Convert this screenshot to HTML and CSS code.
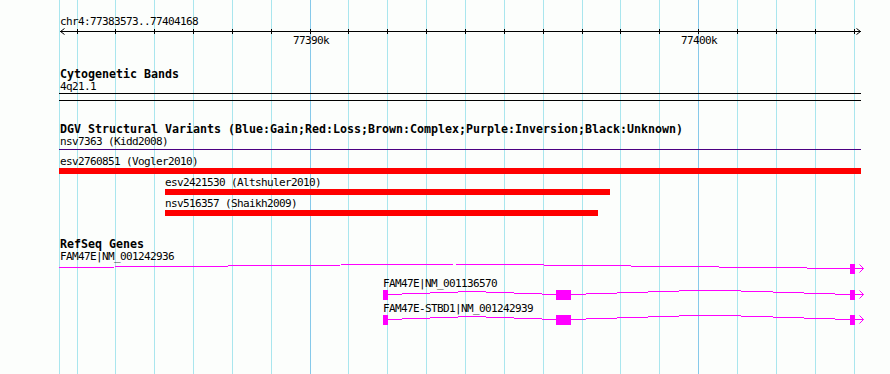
FILE: index.html
```html
<!doctype html>
<html lang="en">
    <head>
        <meta charset="UTF-8" />
        <meta name="viewport" content="width=device-width, initial-scale=1.0" />
        <title>chr4:77383573..77404168</title>
        <link rel="stylesheet" href="styles.css">
    </head>
    <body>
        <div class="panel">
            <svg class="grid" width="890" height="374" shape-rendering="crispEdges">
                <g fill="#a9e6ee">
                    <rect x="59" y="0" width="1" height="374" />
                    <rect x="77" y="0" width="1" height="374" />
                    <rect x="115" y="0" width="1" height="374" />
                    <rect x="154" y="0" width="1" height="374" />
                    <rect x="193" y="0" width="1" height="374" />
                    <rect x="232" y="0" width="1" height="374" />
                    <rect x="271" y="0" width="1" height="374" />
                    <rect x="348" y="0" width="1" height="374" />
                    <rect x="387" y="0" width="1" height="374" />
                    <rect x="426" y="0" width="1" height="374" />
                    <rect x="465" y="0" width="1" height="374" />
                    <rect x="504" y="0" width="1" height="374" />
                    <rect x="543" y="0" width="1" height="374" />
                    <rect x="582" y="0" width="1" height="374" />
                    <rect x="620" y="0" width="1" height="374" />
                    <rect x="659" y="0" width="1" height="374" />
                    <rect x="737" y="0" width="1" height="374" />
                    <rect x="776" y="0" width="1" height="374" />
                    <rect x="815" y="0" width="1" height="374" />
                    <rect x="854" y="0" width="1" height="374" />
                </g>
                <g fill="#86c9ea">
                    <rect x="310" y="0" width="1" height="374" />
                    <rect x="698" y="0" width="1" height="374" />
                </g>
            </svg>

            <div class="tracks">
                <div class="label">chr4:77383573..77404168</div>
                <svg class="ruler" width="890" height="20">
                    <g stroke="#000" fill="none" shape-rendering="crispEdges">
                        <line x1="60" y1="3.5" x2="861" y2="3.5" />
                        <path d="M77.5 1V6M115.5 1V6M154.5 1V6M193.5 1V6M232.5 1V6M271.5 1V6M310.5 1V6M348.5 1V6M387.5 1V6M426.5 1V6M465.5 1V6M504.5 1V6M543.5 1V6M582.5 1V6M620.5 1V6M659.5 1V6M698.5 1V6M737.5 1V6M776.5 1V6M815.5 1V6M854.5 1V6" />
                    </g>
                    <g stroke="#000" fill="none">
                        <polyline points="64.5,0.5 60.5,3.5 64.5,6.5" />
                        <polyline points="856.5,0.5 860.5,3.5 856.5,6.5" />
                    </g>
                    <text class="tick-label" x="311" y="16">77390k</text>
                    <text class="tick-label" x="699" y="16">77400k</text>
                </svg>

                <section class="track">
                    <div class="track-title">Cytogenetic Bands</div>
                    <div class="label">4q21.1</div>
                    <div class="band"></div>
                </section>

                <section class="track">
                    <div class="track-title">DGV Structural Variants (Blue:Gain;Red:Loss;Brown:Complex;Purple:Inversion;Black:Unknown)</div>
                    <div class="label">nsv7363 (Kidd2008)</div>
                    <div class="group-line"></div>
                    <div class="label variant">esv2760851 (Vogler2010)</div>
                    <div class="bar" style="margin-left: 59px; width: 802px"></div>
                    <div class="label variant" style="padding-left: 165px">esv2421530 (Altshuler2010)</div>
                    <div class="bar" style="margin-left: 165px; width: 445px"></div>
                    <div class="label variant" style="padding-left: 165px">nsv516357 (Shaikh2009)</div>
                    <div class="bar" style="margin-left: 165px; width: 433px"></div>
                </section>

                <section class="track">
                    <div class="track-title">RefSeq Genes</div>
                    <div class="label">FAM47E|NM_001242936</div>
                    <svg class="genes" width="890" height="70">
                        <g stroke="#ff00ff" fill="none" shape-rendering="crispEdges">
                            <polyline points="59,4.5 455,1 850,5.5" />
                            <polyline points="388,31.5 472,28.5 556,31.5" />
                            <polyline points="571,31.5 710,27 850,31.5" />
                            <polyline points="388,56.5 472,53.5 556,56.5" />
                            <polyline points="571,56.5 710,52 850,56.5" />
                        </g>
                        <g fill="#ff00ff" shape-rendering="crispEdges">
                            <rect x="850" y="1" width="5" height="10" />
                            <rect x="383" y="27" width="5" height="10" />
                            <rect x="556" y="27" width="15" height="10" />
                            <rect x="850" y="27" width="5" height="10" />
                            <rect x="383" y="52" width="5" height="10" />
                            <rect x="556" y="52" width="15" height="10" />
                            <rect x="850" y="52" width="5" height="10" />
                        </g>
                        <g stroke="#ff00ff" fill="none">
                            <path d="M855 5.5H863.5M859.5 1.5L863.5 5.5L859.5 9.5" />
                            <path d="M855 31.5H863.5M859.5 27.5L863.5 31.5L859.5 35.5" />
                            <path d="M855 56.5H863.5M859.5 52.5L863.5 56.5L859.5 60.5" />
                        </g>
                        <text class="gene-label" x="383" y="24">FAM47E|NM_001136570</text>
                        <text class="gene-label" x="383" y="49">FAM47E-STBD1|NM_001242939</text>
                    </svg>
                </section>
            </div>
        </div>
    </body>
</html>
```

FILE: styles.css
```css
* {
    margin: 0;
    padding: 0;
    box-sizing: border-box;
}
body {
    background: #fcfefc;
    font-family: "DejaVu Sans Mono", "Liberation Mono", monospace;
    color: #000;
}

.panel {
    position: relative;
    width: 890px;
    height: 374px;
    overflow: hidden;
}
.grid {
    position: absolute;
    top: 0;
    left: 0;
}

.tracks {
    position: relative;
    display: flex;
    flex-direction: column;
    padding-top: 15px;
}

.label {
    font-size: 11px;
    letter-spacing: -0.62px;
    line-height: 13px;
    height: 13px;
    padding-left: 60px;
    white-space: nowrap;
}
.ruler {
    display: block;
}
.tick-label,
.gene-label {
    font-family: "DejaVu Sans Mono", "Liberation Mono", monospace;
    font-size: 11px;
    letter-spacing: -0.62px;
    fill: #000;
}
.tick-label {
    text-anchor: middle;
}

.track {
    display: flex;
    flex-direction: column;
    margin-top: 22px;
}
.track:first-of-type {
    margin-top: 20px;
}
.track-title {
    font-size: 11.63px;
    font-weight: 700;
    line-height: 12px;
    height: 12px;
    padding-left: 60px;
    white-space: nowrap;
}

.band {
    margin-left: 59px;
    width: 802px;
    height: 8px;
    border-top: 1px solid #000;
    border-bottom: 1px solid #000;
}

.group-line {
    margin-top: 1px;
    margin-left: 59px;
    width: 802px;
    height: 1px;
    background: #4b0082;
}
.variant {
    margin-top: 2px;
}
.group-line + .variant {
    margin-top: 5px;
}
.bar {
    height: 6px;
    background: #ff0000;
}

.genes {
    display: block;
}
```
